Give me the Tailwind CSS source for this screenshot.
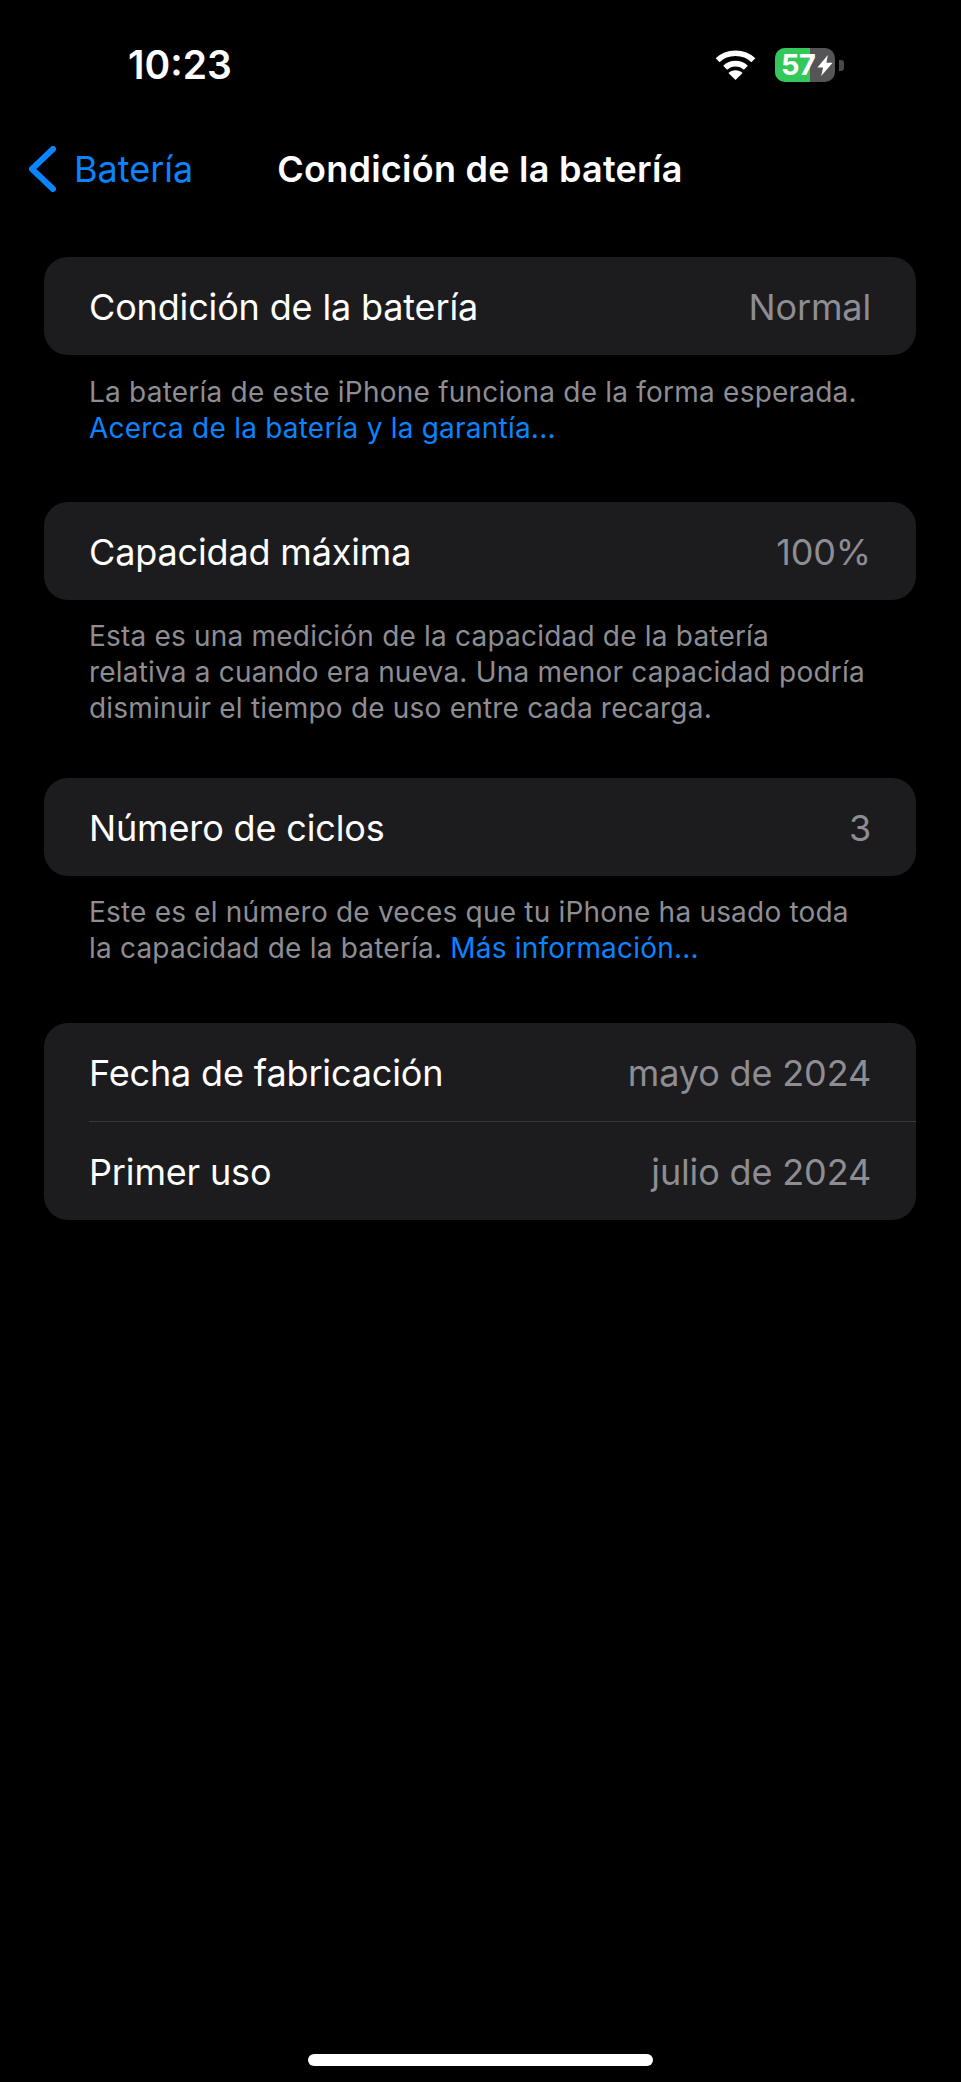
<!DOCTYPE html>
<html lang="es">
<head>
  <meta charset="UTF-8" />
  <title>Condición de la batería</title>
  <script src="https://cdn.jsdelivr.net/npm/@tailwindcss/browser@4"></script>
</head>
<body class="bg-black text-white font-['Inter',sans-serif]">
  <div class="relative w-[961px] h-[2082px] overflow-hidden bg-black">
    <!-- status bar -->
    <div class="flex items-center h-[46px] mt-[42px] pl-[128px] pr-[117px] justify-between">
      <span class="text-[39px] font-semibold leading-[46px]">10:23</span>
      <div class="flex items-center gap-[18px]">
        <svg width="43" height="32" viewBox="0 0 44 34" fill="none" stroke="white" stroke-width="6">
          <path d="M3 12 C13 2 31 2 41 12" />
          <path d="M11 20 C17 14 27 14 33 20" />
          <path d="M22 33 L14.5 25.5 C18.5 21.5 25.5 21.5 29.5 25.5 Z" fill="white" stroke="none" />
        </svg>
        <div class="flex items-center gap-[4px]">
          <div class="relative flex w-[60px] h-[34px] rounded-[10px] overflow-hidden bg-[#555557]">
            <div class="w-[35px] h-full bg-[#34c759]"></div>
            <span class="absolute left-[6px] top-0 text-[29px] leading-[34px] font-bold tracking-[-0.5px]">57</span>
            <svg class="absolute left-[42px] top-[7px]" width="16" height="21" viewBox="0 0 16 22" fill="white"><path d="M11 0 L0 13 H6 L4 22 L16 8 H9.5 Z" /></svg>
          </div>
          <div class="w-[5px] h-[11px] rounded-r-[3px] bg-[#48484a]"></div>
        </div>
      </div>
    </div>

    <!-- nav bar -->
    <div class="flex items-center h-[46px] mt-[58px] pl-[28px]">
      <svg width="29" height="46" viewBox="0 0 29 46" fill="none" stroke="#0a84ff" stroke-width="6" stroke-linecap="round" stroke-linejoin="round"><path d="M25 3 L4 23 L25 43" /></svg>
      <span class="ml-[17px] text-[36px] leading-[46px] text-[#0a84ff]">Batería</span>
      <span class="ml-[84px] text-[36px] leading-[46px] font-semibold tracking-[0.25px]">Condición de la batería</span>
    </div>

    <!-- list -->
    <div class="mt-[65px] pl-[44px] pr-[45px] tracking-[-0.15px]">
      <div class="flex items-center justify-between h-[98px] pt-[1px] pl-[45px] pr-[45px] rounded-[24px] bg-[#1c1c1e] text-[36px]">
        <span>Condición de la batería</span>
        <span class="text-[#8d8d93]">Normal</span>
      </div>
      <p class="mt-[19px] px-[45px] text-[28px] leading-[36px] tracking-[0.22px] text-[#8d8d93]">La batería de este iPhone funciona de la forma esperada.<br /><span class="text-[#0a84ff]">Acerca de la batería y la garantía...</span></p>

      <div class="flex items-center justify-between h-[98px] mt-[56px] pt-[1px] pl-[45px] pr-[45px] rounded-[24px] bg-[#1c1c1e] text-[36px]">
        <span>Capacidad máxima</span>
        <span class="text-[#8d8d93]">100%</span>
      </div>
      <p class="mt-[18px] px-[45px] text-[28px] leading-[36px] tracking-[0.2px] text-[#8d8d93]">Esta es una medición de la capacidad de la batería<br />relativa a cuando era nueva. Una menor capacidad podría<br />disminuir el tiempo de uso entre cada recarga.</p>

      <div class="flex items-center justify-between h-[98px] mt-[52px] pt-[2px] pl-[45px] pr-[45px] rounded-[24px] bg-[#1c1c1e] text-[36px]">
        <span>Número de ciclos</span>
        <span class="text-[#8d8d93]">3</span>
      </div>
      <p class="mt-[18px] px-[45px] text-[28px] leading-[36px] tracking-[0.2px] text-[#8d8d93]">Este es el número de veces que tu iPhone ha usado toda<br />la capacidad de la batería. <span class="text-[#0a84ff]">Más información...</span></p>

      <div class="mt-[57px] pl-[45px] rounded-[24px] bg-[#1c1c1e] text-[36px]">
        <div class="flex items-center justify-between h-[99px] pt-[1px] pr-[45px] border-b border-[#38383a]">
          <span>Fecha de fabricación</span>
          <span class="text-[#8d8d93]">mayo de 2024</span>
        </div>
        <div class="flex items-center justify-between h-[98px] pt-[1px] pr-[45px]">
          <span>Primer uso</span>
          <span class="text-[#8d8d93]">julio de 2024</span>
        </div>
      </div>
    </div>

    <!-- home indicator -->
    <div class="absolute left-[308px] top-[2054px] w-[345px] h-[12px] rounded-full bg-white"></div>
  </div>
</body>
</html>
